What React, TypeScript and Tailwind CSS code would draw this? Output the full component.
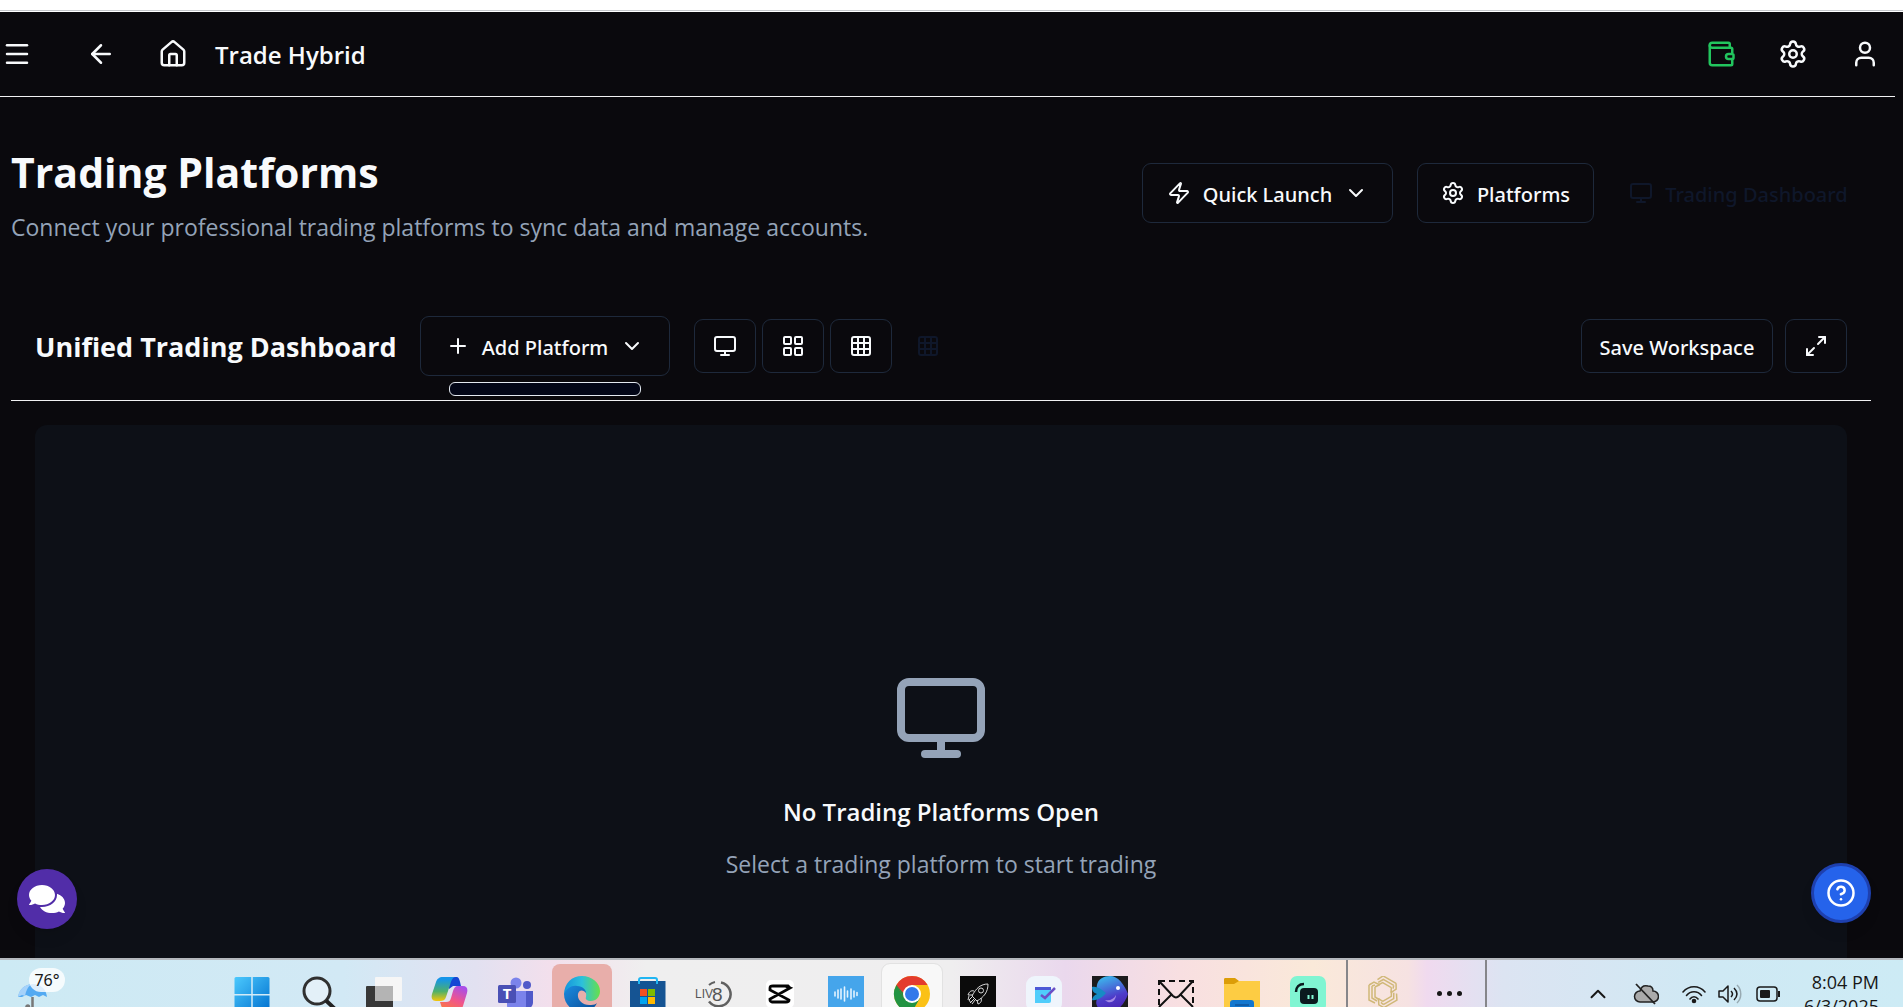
import type { ReactNode } from 'react';
import {
  ArrowLeft,
  ChevronDown,
  ChevronUp,
  CircleHelp,
  Grid3x3,
  House,
  LayoutGrid,
  Maximize2,
  Menu,
  Monitor,
  Plus,
  Settings,
  User,
  Wallet,
  Zap,
} from 'lucide-react';
import { FaComments } from 'react-icons/fa';

const outline =
  'flex items-center justify-center rounded-[9px] border border-[#1e293b] text-[#f8fafc] font-medium text-[20px] leading-7 whitespace-nowrap';

function Header() {
  return (
    <header className="mr-2 flex h-[85px] shrink-0 items-center justify-between border-b border-[#f1f1f3] pr-[15px] pl-[2px] text-[#f8fafc]">
      <div className="flex items-center">
        <button aria-label="Menu" className="mr-[54px]"><Menu size={30} /></button>
        <button aria-label="Back" className="mr-[42px]"><ArrowLeft size={30} /></button>
        <a href="#home" aria-label="Home" className="mr-[27px]"><House size={30} /></a>
        <span className="pt-[2px] font-['Open_Sans'] text-2xl leading-9 font-semibold">Trade Hybrid</span>
      </div>
      <div className="flex items-center gap-[42px]">
        <button aria-label="Wallet" className="text-[#22c55e]"><Wallet size={30} /></button>
        <button aria-label="Settings"><Settings size={30} /></button>
        <button aria-label="Account"><User size={30} /></button>
      </div>
    </header>
  );
}

function PageIntro() {
  return (
    <div className="flex items-start justify-between pt-[48px]">
      <div>
        <h1 className="font-['Open_Sans'] text-[41px] leading-[54px] font-bold text-[#f8fafc]">Trading Platforms</h1>
        <p className="mt-[10px] font-['Open_Sans'] text-[23px] leading-9 text-[#94a3b8]">
          Connect your professional trading platforms to sync data and manage accounts.
        </p>
      </div>
      <div className="mt-[18px] flex gap-6">
        <button className={outline + ' h-[60px] w-[251px]'}>
          <Zap size={24} className="mr-3" /><span className="pt-[3px]">Quick Launch</span><ChevronDown size={24} className="ml-3" />
        </button>
        <button className={outline + ' h-[60px] w-[177px]'}>
          <Settings size={24} className="mr-3" /><span className="pt-[3px]">Platforms</span>
        </button>
        <button className="mr-3 flex h-[60px] w-[241px] items-center justify-center text-[20px] leading-7 font-medium whitespace-nowrap text-[#0f172a]">
          <Monitor size={24} className="mr-3" /><span className="pt-[3px]">Trading Dashboard</span>
        </button>
      </div>
    </div>
  );
}

function Toolbar() {
  const square = ' h-[54px] w-[62px]';
  return (
    <div className="mt-[47px] flex h-[109px] items-center justify-between border-b border-[#f1f1f3] px-6">
      <div className="flex items-center">
        <h2 className="mr-6 w-[361px] pt-[2px] font-['Open_Sans'] text-[27px] leading-9 font-bold whitespace-nowrap text-[#f8fafc]">Unified Trading Dashboard</h2>
        <div className="relative mr-6">
          <button className={outline + ' h-[60px] w-[250px]'}>
            <Plus size={24} className="mr-3" /><span className="pt-[3px]">Add Platform</span><ChevronDown size={24} className="ml-3" />
          </button>
          <div className="absolute top-[66px] left-[29px] h-[14px] w-[192px] rounded-md border border-[#e2e8f0] bg-[#020617]" />
        </div>
        <div className="flex gap-[6px]">
          <button aria-label="Single view" className={outline + square}><Monitor size={24} /></button>
          <button aria-label="Four panes" className={outline + square}><LayoutGrid size={24} /></button>
          <button aria-label="Nine panes" className={outline + square}><Grid3x3 size={24} /></button>
          <button aria-label="Custom grid" className="flex h-[54px] w-[60px] items-center justify-center text-[#0f172a]"><Grid3x3 size={24} /></button>
        </div>
      </div>
      <div className="flex gap-3">
        <button className={outline + ' h-[54px] w-[192px]'}><span className="pt-[3px]">Save Workspace</span></button>
        <button aria-label="Expand" className={outline + square}><Maximize2 size={24} /></button>
      </div>
    </div>
  );
}

function Slot({ label, children, tile = '' }: { label: string; children: ReactNode; tile?: string }) {
  return (
    <button aria-label={label} className="flex h-[60px] w-[66px] shrink-0 justify-center">
      <span className={'flex h-[60px] w-[60px] justify-center rounded-lg pt-3 ' + tile}>
        <svg viewBox="0 0 36 36" className="h-9 w-9 overflow-visible">{children}</svg>
      </span>
    </button>
  );
}

function Apps() {
  return (
    <div className="flex">
      <Slot label="Start">
        <defs>
          <linearGradient id="win" x1="0" y1="0" x2="1" y2="1"><stop stopColor="#4cc9fd" /><stop offset="1" stopColor="#0070cf" /></linearGradient>
        </defs>
        <rect x="0.5" y="1" width="35" height="35" rx="1.5" fill="url(#win)" />
        <path d="M18 1v35M0 18.700h36" stroke="#d4ebf7" strokeWidth="1.500" />
      </Slot>
      <Slot label="Search">
        <circle cx="17" cy="15" r="13" fill="#e3f0f8" stroke="#303030" strokeWidth="3" />
        <path d="M26 24.500 36 34" stroke="#222" strokeWidth="4" />
      </Slot>
      <Slot label="Task view">
        <rect x="0" y="10" width="27" height="26" rx="1" fill="#383838" />
        <rect x="9" y="1" width="27" height="24" rx="1" fill="#f6f6f6" />
        <path d="M9 10h18v15H9z" fill="#b4b4b4" />
      </Slot>
      <Slot label="Copilot">
        <defs>
          <linearGradient id="cpA" x1="0" y1="0" x2="0" y2="1"><stop offset="0.100" stopColor="#1595e8" /><stop offset="0.600" stopColor="#4eb06a" /><stop offset="1" stopColor="#f5c60a" /></linearGradient>
          <linearGradient id="cpB" x1="0.700" y1="0" x2="0.200" y2="1"><stop stopColor="#a94ee8" /><stop offset="0.500" stopColor="#f0558c" /><stop offset="1" stopColor="#fb7a3c" /></linearGradient>
        </defs>
        <path d="M17 1h8c2 0 3 4 4 9h-8l-4 3z" fill="#1546d4" />
        <path d="M11 1h12c-3 1-4 4-5 8l-4 12c-1 3-3 4-6 4H4c-4 0-5-3-4-7L4 6c1-3 3-5 7-5z" fill="url(#cpA)" />
        <path d="M26 10h5c4 0 5 3 4 7l-4 13c-1 3-3 5-7 5H11l-3-9h6c3 0 4-1 5-4l2-7c1-3 2-5 5-5z" fill="url(#cpB)" />
      </Slot>
      <Slot label="Teams">
        <circle cx="18" cy="7" r="5.500" fill="#7b83eb" />
        <circle cx="29" cy="9" r="4" fill="#5059c9" />
        <path d="M24 15h11v12a7 7 0 0 1-9 6z" fill="#5059c9" />
        <path d="M9 15h19v14a9 9 0 0 1-19 0z" fill="#7b83eb" />
        <rect x="0" y="9" width="18" height="18" rx="1.500" fill="#4a50b5" />
        <text x="9" y="23" textAnchor="middle" fontSize="15" fontWeight="700" fill="#fff">T</text>
      </Slot>
      <Slot label="Edge" tile="bg-[#e8aeaa]">
        <defs>
          <linearGradient id="edA" x1="0" y1="0.500" x2="1" y2="0.500"><stop stopColor="#1594dc" /><stop offset="0.500" stopColor="#2cc0dc" /><stop offset="1" stopColor="#67e04a" /></linearGradient>
          <linearGradient id="edB" x1="0" y1="0" x2="1" y2="1"><stop stopColor="#1a8be0" /><stop offset="1" stopColor="#0a4a94" /></linearGradient>
        </defs>
        <path d="M0 19C0 7 8 0 18 0s18 7 18 15c0 6-4 10-9 10-4 0-6-2-5-4 1-4-1-7-5-8-7-1-12 1-17 6z" fill="url(#edA)" />
        <path d="M0 18c3-6 8-9 13-8 6 0 9 4 9 7-2-3-7-4-8 1-1 6 5 12 13 11 3 0 5-1 6-2-3 6-8 9-15 9C8 36 0 28 0 18z" fill="url(#edB)" />
      </Slot>
      <Slot label="Store">
        <path d="M0 5h35.500v31H0z" fill="#155493" />
        <path d="M9 8V4a2 2 0 0 1 2-2h14a2 2 0 0 1 2 2v4" fill="none" stroke="#20b6f2" strokeWidth="2" />
        <path d="M10 13h7v7h-7z" fill="#f25022" /><path d="M18 13h7v7h-7z" fill="#7fba00" />
        <path d="M10 21h7v7h-7z" fill="#00a4ef" /><path d="M18 21h7v7h-7z" fill="#ffb900" />
      </Slot>
      <Slot label="LIV8">
        <path d="M13 9A12 12 0 0 1 19 6" fill="none" stroke="#606060" strokeWidth="2" />
        <path d="M25 6.500a12 12 0 1 1-12 19" fill="none" stroke="#606060" strokeWidth="2.500" />
        <text x="-1" y="22" fontSize="12" fill="#555" className="font-['Liberation_Sans']">LIV</text>
        <text x="16" y="25" fontSize="19" fill="#555" className="font-['Liberation_Sans']">8</text>
      </Slot>
      <Slot label="CapCut">
        <rect x="4" y="4" width="28" height="28" rx="5" fill="#fff" />
        <path d="M8 12c0-2 1-2 3-2h12l5 2-20 11v1c0 1 1 2 2 2h14c2 0 3-1 3-2L8 14v-2M23 10h3l2 2" fill="none" stroke="#050505" strokeWidth="2.800" />
      </Slot>
      <Slot label="Audio editor">
        <path d="M0 0h36v36H0z" fill="#45a5eb" />
        <path d="M7 16v4M10 14v8M13 13v10M16.500 11v14M19.500 15v6M23 13v10M26 15v6M29 16.500v3" stroke="#e3f3ff" strokeWidth="1.600" strokeLinecap="round" />
      </Slot>
      <Slot label="Chrome" tile="bg-[#f8f8f8] outline outline-[#e2e2e2]">
        <circle cx="18" cy="18" r="18" fill="#fbc116" />
        <path d="M18 18 2.400 9A18 18 0 0 0 18 36l8-14z" fill="#229342" />
        <path d="M2.400 9a18 18 0 0 1 31.200 0H18l-8 13z" fill="#e33b2e" />
        <path d="M2.400 9 10 22l8 0-8-4z" fill="#229342" />
        <circle cx="18" cy="18" r="9" fill="#fff" /><circle cx="18" cy="18" r="7" fill="#3279ea" />
      </Slot>
      <Slot label="Rocket">
        <path d="M0 0h36v36H0z" fill="#0b0b0b" />
        <g fill="none" stroke="#d8d8d8" strokeWidth="1">
          <path d="M28 8c-7 0-12 4-16 12l5 5c7-4 11-9 11-17zM14 15c-3-1-5 1-6 4l5 0M21 22c1 3 0 5-3 6l-1-4" />
          <circle cx="21" cy="14.500" r="2.500" /><path d="m12 21-3 3 2 3M14 23l-4 4M15 24l-3 4M9 20l-1 4" />
        </g>
      </Slot>
      <Slot label="Tasks">
        <rect width="36" height="36" rx="9" fill="#eff5fc" />
        <path d="M9 11h16v14a2 2 0 0 1-2 2H9z" fill="#50cdfb" /><path d="M9 11h16v3H9z" fill="#4c59d6" />
        <path d="m15 19 4 3 10-10" fill="none" stroke="#6b50c6" strokeWidth="2.500" />
      </Slot>
      <Slot label="Fish">
        <defs><linearGradient id="fish" x1="0.300" y1="0" x2="0.600" y2="1"><stop stopColor="#3cb6ec" /><stop offset="0.600" stopColor="#4d3bc9" /><stop offset="1" stopColor="#4b21b0" /></linearGradient></defs>
        <path d="M0 0h36v36H0z" fill="#1c1c1e" />
        <path d="M5 9C6 3 12 0 18 0c8 0 14 8 18 18-3 9-9 17-18 18C8 36 2 30 5 23l4-6c-3-2-5-4-4-8z" fill="url(#fish)" />
        <path d="M0 11c5-1 9 2 14 6-4 5-10 8-14 7 1-4 3-5 5-6-3-1-5-3-5-7z" fill="#168bc4" />
        <path d="M13 24c5 1 9-1 11-5 0 6-6 10-11 5z" fill="#a48ae6" /><circle cx="26" cy="12" r="2" fill="#fff" />
      </Slot>
      <Slot label="Mail">
        <g fill="none" stroke="#111" strokeWidth="2"><path d="M1 5h34v28H1z" strokeDasharray="6 4" /><path d="m1 5 14 15c2 2 4 2 6 0L35 5M1 31l12-12M35 31 23 19" /></g>
      </Slot>
      <Slot label="Files">
        <path d="M0 3c0-1 1-1 2-1h9l4 3h20v31H0z" fill="#dc9d08" /><path d="M0 8h10l5-3h21v31H0z" fill="#fdcc43" />
        <rect x="6" y="24" width="24" height="12" rx="3" fill="#1277cf" /><path d="M11 29h14" stroke="#0f559c" strokeWidth="1.500" />
      </Slot>
      <Slot label="Streamlabs">
        <rect width="36" height="36" rx="7" fill="#80f5d2" /><rect x="10" y="12" width="18" height="16" rx="4" fill="#0a1a1e" />
        <path d="M6 16c0-5 3-8 8-8" fill="none" stroke="#0a1a1e" strokeWidth="2.500" /><path d="M18.500 19v4M22.500 19v4" stroke="#80f5d2" strokeWidth="2" />
      </Slot>
    </div>
  );
}

function HexBlade({ turn }: { turn: number }) {
  return <path transform={`rotate(${turn} 15 16)`} d="M1 9v15l6 3M1 9l5-3 6 3M4 10v12l5 3M4 10l3-1M7 11v10l4 2.500M7 11l4-2" />;
}

function Taskbar() {
  return (
    <footer className="flex h-[49px] shrink-0 items-start overflow-hidden border-t-2 border-[#b4b8bd] bg-[linear-gradient(90deg,#cdeaf4_0%,#d2e9f5_18%,#e2e1f1_25%,#f3dfec_29%,#efefef_34%,#efeeef_50%,#ead8ed_56%,#f8dfe1_62%,#fae9d9_69%,#f6e2e2_74%,#f0daef_75%,#dce4f2_79%,#cfe9f4_90%,#cdebf5_100%)] text-neutral-900">
      <button aria-label="Weather" className="relative h-12 w-[219px] shrink-0">
        <svg viewBox="0 0 36 36" className="absolute top-[18px] left-4 h-9 w-9">
          <path d="M2 19C4 10 9 7 16 6c9 0 14 5 15 13l-4-2-4 2-4-2-4 2-5-2-4 2z" fill="#53aaf2" />
          <path d="M2 19c1-8 6-12 14-13-5 3-6 8-7 12l-3-1z" fill="#a5d2fa" />
          <path d="M16.500 19v17M10 29c1-2 3-2 3 0v6" fill="none" stroke="#777" strokeWidth="2.500" />
        </svg>
        <span className="absolute top-2 left-[29px] flex h-6 w-9 items-center justify-center rounded-full bg-white/80 text-base">76°</span>
      </button>
      <div className="flex pt-1"><Apps /></div>
      <div className="ml-[5px] flex h-[60px] w-[141px] shrink-0 items-start justify-between border-x-2 border-[#86868a] pt-4 pr-[23px] pl-[20px]">
        <svg viewBox="0 0 30 32" className="h-8 w-[30px]" fill="none" stroke="#d0b878" strokeWidth="1.500">
          <HexBlade turn={0} />
          <HexBlade turn={120} />
          <HexBlade turn={240} />
        </svg>
        <span className="mt-[15px] flex gap-[5px]">
          <i className="h-[5px] w-[5px] rounded-full bg-neutral-900" /><i className="h-[5px] w-[5px] rounded-full bg-neutral-900" /><i className="h-[5px] w-[5px] rounded-full bg-neutral-900" />
        </span>
      </div>
      <div className="ml-auto flex items-start pr-6">
        <button aria-label="Hidden icons" className="mt-[21px] mr-[22px]"><ChevronUp size={26} strokeWidth={1.8} /></button>
        <svg viewBox="0 0 26 24" className="mt-[22px] mr-[22px] h-6 w-[26px]">
          <path d="M7 20a5.500 5.500 0 0 1 0-11c1-4 4-6 8-5 3 0 5 2 5 5a5.500 5.500 0 0 1 0 11z" fill="#aaa" stroke="#222" strokeWidth="1.500" /><path d="m3 2 19 20" stroke="#222" strokeWidth="1.800" />
        </svg>
        <svg viewBox="0 0 26 24" className="mt-[22px] mr-[10px] h-6 w-[26px]" fill="none" stroke="#1a1a1a" strokeWidth="1.600" strokeLinecap="round">
          <path d="M2 10c6-7 16-7 22 0M5.500 13.500c4-5 11-5 15 0M9 17c2-3 6-3 8 0" /><circle cx="13" cy="19" r="1.500" fill="#1a1a1a" />
        </svg>
        <svg viewBox="0 0 26 24" className="mt-[22px] mr-3 h-6 w-[26px]" fill="none" stroke="#1a1a1a" strokeWidth="1.500" strokeLinejoin="round">
          <path d="M2 9v6h4l5 5V4L6 9zM14 9c2 2 2 4 0 6M17 6c4 4 4 8 0 12" /><path d="M20 3c5 5 5 13 0 18" opacity="0.300" />
        </svg>
        <svg viewBox="0 0 26 24" className="mt-[22px] mr-[23px] h-6 w-[26px]">
          <rect x="2" y="5" width="20" height="14" rx="3" fill="none" stroke="#1a1a1a" strokeWidth="1.500" /><rect x="5" y="8" width="10" height="8" rx="1" fill="#1a1a1a" /><path d="M23 9h2v6h-2z" fill="#1a1a1a" />
        </svg>
        <div className="pt-[10px] text-right font-['Open_Sans'] text-lg leading-6 whitespace-nowrap"><div>8:04 PM</div><div>6/3/2025</div></div>
      </div>
    </footer>
  );
}

export default function App() {
  return (
    <div className="flex h-screen flex-col overflow-hidden bg-[#0a090d] font-['Noto_Sans','Open_Sans',sans-serif]">
      <div className="h-3 shrink-0 border-b border-white bg-white pt-[10px]"><div className="h-px bg-[#c4c6ca]" /></div>
      <Header />
      <main className="flex min-h-0 flex-1 flex-col pr-8 pl-[11px]">
        <PageIntro />
        <Toolbar />
        <section className="mx-6 mt-6 flex min-h-0 flex-1 flex-col items-center justify-start rounded-t-xl bg-[#0d1017] pt-[245px]">
          <Monitor size={96} className="shrink-0 text-[#94a3b8]" />
          <h3 className="mt-[28px] font-['Open_Sans'] text-2xl leading-9 font-semibold text-[#f8fafc]">No Trading Platforms Open</h3>
          <p className="mt-4 font-['Open_Sans'] text-[23px] leading-9 text-[#94a3b8]">Select a trading platform to start trading</p>
        </section>
      </main>
      <Taskbar />
      <button aria-label="Chat" className="fixed bottom-[78px] left-[17px] flex h-[60px] w-[60px] items-center justify-center rounded-full bg-[#512da8] text-white shadow-lg"><FaComments size={36} /></button>
      <button aria-label="Help" className="fixed right-8 bottom-[84px] flex h-[60px] w-[60px] items-center justify-center rounded-full border-3 border-[#1e40af] bg-[#2563eb] text-white shadow-lg"><CircleHelp size={30} /></button>
    </div>
  );
}
